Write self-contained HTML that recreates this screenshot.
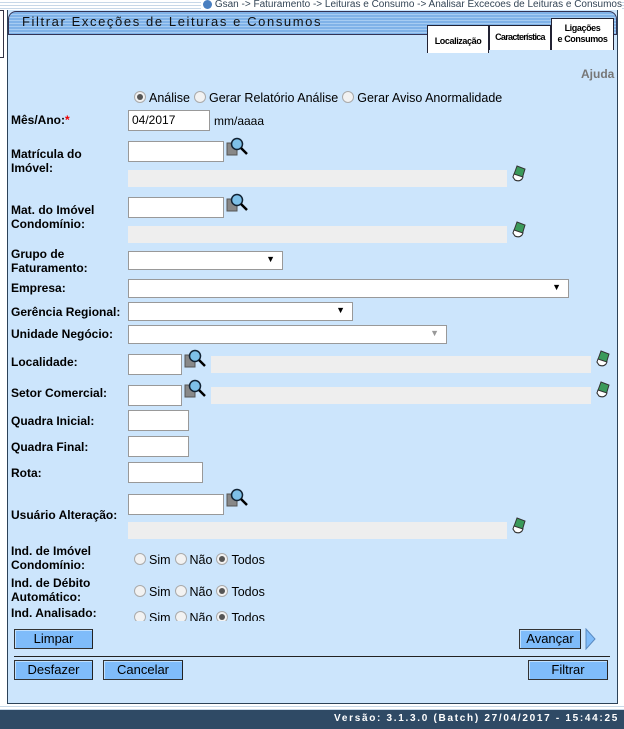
<!DOCTYPE html>
<html><head><meta charset="utf-8"><style>
*{margin:0;padding:0;box-sizing:border-box}
body{width:624px;height:729px;position:relative;overflow:hidden;background:#fff;font-family:"Liberation Sans",sans-serif;font-size:12px;color:#000}
.a{position:absolute}
.top{left:0;top:0;width:624px;height:10px;background:repeating-linear-gradient(#fff 0,#fff 2px,#c8d8e8 2px,#c8d8e8 3px)}
.crumb{right:2px;top:-1px;font-size:10px;color:#345;background:#fff;padding-left:14px;line-height:11px}
.crumb:before{content:"";position:absolute;left:2px;top:1px;width:9px;height:9px;border-radius:50%;background:#4a7fc0}
.panel{left:7px;top:10px;width:611px;height:694px;background:#cce5fc;border:1px solid #2c4258;border-top:none}
.hdr{left:8px;top:11px;width:609px;height:24px;border-radius:8px 8px 0 0;background:repeating-linear-gradient(#7fb2e8 0,#7fb2e8 2px,#a6ccf2 2px,#a6ccf2 3px);border:1px solid #335}
.ttl{left:22px;top:14px;font-size:13px;letter-spacing:1.6px;color:#111}
.tab{background:#fff;border:1px solid #223;border-bottom:none;font-weight:bold;font-size:9px;letter-spacing:-0.4px;text-align:center;line-height:11px;white-space:nowrap;overflow:hidden}
.lb{font-weight:bold;font-size:12px;line-height:14px}
.in{background:#fff;border:1px solid #999;height:21px;padding:2px 3px;font-size:12px}
.ro{background:#eee;height:17px}
.sel{background:#fff;border:1px solid #999;height:19px}
.sel:after{content:"▼";position:absolute;right:7px;top:2px;font-size:9px}
.rg{font-size:12.5px}
.r{width:12px;height:12px;border-radius:50%;border:1px solid #aaa;background:#f2f2f2;display:inline-block;vertical-align:-1px;margin:0 3px 0 4px}
.r:first-child{margin-left:0}
.r.on:after{content:"";display:block;width:6px;height:6px;margin:2px;border-radius:50%;background:#555}
.btn{background:#7fbcfa;border:1px solid #333;border-right-color:#222;box-shadow:inset 1px 1px #bfe0ff;height:20px;text-align:center;font-size:13px;line-height:18px}
.lp{width:22px;height:22px}
.er{width:16px;height:18px}
.foot{left:0;top:710px;width:624px;height:19px;background:#2f4a65;color:#fff;font-weight:bold;font-size:10px;letter-spacing:1.7px;text-align:right;padding-right:5px;line-height:17px}
</style></head><body>
<div class="a top"></div>
<div class="a crumb">Gsan -&gt; Faturamento -&gt; Leituras e Consumo -&gt; Analisar Excecoes de Leituras e Consumos</div>
<div class="a" style="left:0;top:10px;width:4px;height:48px;border:1px solid #334;border-left:none"></div>
<div class="a panel"></div>
<div class="a hdr"></div>
<div class="a ttl">Filtrar Exceções de Leituras e Consumos</div>
<div class="a tab" style="left:427px;top:25px;width:62px;height:28px;line-height:24px;padding-top:3px">Localização</div>
<div class="a tab" style="left:489px;top:25px;width:62px;height:25px;line-height:22px;letter-spacing:-0.7px">Característica</div>
<div class="a tab" style="left:551px;top:18px;width:63px;height:32px;padding-top:4px">Ligações<br>e Consumos</div>
<div class="a lb" style="left:581px;top:67px;color:#777">Ajuda</div>

<div class="a rg" style="left:134px;top:91px"><span class="r on"></span>Análise<span class="r"></span>Gerar Relatório Análise<span class="r"></span>Gerar Aviso Anormalidade</div>
<div class="a lb" style="left:11px;top:113px">Mês/Ano:<span style="color:#e00">*</span></div>
<div class="a in" style="left:128px;top:110px;width:82px">04/2017</div>
<div class="a" style="left:214px;top:114px">mm/aaaa</div>

<div class="a lb" style="left:11px;top:147px">Matrícula do<br>Imóvel:</div>
<div class="a in" style="left:128px;top:141px;width:96px"></div>
<div class="a ro" style="left:128px;top:170px;width:379px"></div>
<div class="a lb" style="left:11px;top:203px">Mat. do Imóvel<br>Condomínio:</div>
<div class="a in" style="left:128px;top:197px;width:96px"></div>
<div class="a ro" style="left:128px;top:226px;width:379px"></div>

<div class="a lb" style="left:11px;top:247px">Grupo de<br>Faturamento:</div>
<div class="a sel" style="left:128px;top:251px;width:155px"></div>
<div class="a lb" style="left:11px;top:281px">Empresa:</div>
<div class="a sel" style="left:128px;top:279px;width:441px"></div>
<div class="a lb" style="left:11px;top:305px">Gerência Regional:</div>
<div class="a sel" style="left:128px;top:302px;width:225px"></div>
<div class="a lb" style="left:11px;top:327px">Unidade Negócio:</div>
<div class="a sel" style="left:128px;top:325px;width:319px;color:#999"></div>

<div class="a lb" style="left:11px;top:355px">Localidade:</div>
<div class="a in" style="left:128px;top:354px;width:54px"></div>
<div class="a ro" style="left:211px;top:356px;width:380px"></div>
<div class="a lb" style="left:11px;top:386px">Setor Comercial:</div>
<div class="a in" style="left:128px;top:385px;width:54px"></div>
<div class="a ro" style="left:211px;top:387px;width:380px"></div>
<div class="a lb" style="left:11px;top:414px">Quadra Inicial:</div>
<div class="a in" style="left:128px;top:410px;width:61px"></div>
<div class="a lb" style="left:11px;top:440px">Quadra Final:</div>
<div class="a in" style="left:128px;top:436px;width:61px"></div>
<div class="a lb" style="left:11px;top:466px">Rota:</div>
<div class="a in" style="left:128px;top:462px;width:75px"></div>
<div class="a lb" style="left:11px;top:508px">Usuário Alteração:</div>
<div class="a in" style="left:128px;top:494px;width:96px"></div>
<div class="a ro" style="left:128px;top:522px;width:379px"></div>

<div class="a lb" style="left:11px;top:544px">Ind. de Imóvel<br>Condomínio:</div>
<div class="a rg" style="left:134px;top:553px"><span class="r"></span>Sim<span class="r"></span>Não<span class="r on"></span>Todos</div>
<div class="a lb" style="left:11px;top:576px">Ind. de Débito<br>Automático:</div>
<div class="a rg" style="left:134px;top:585px"><span class="r"></span>Sim<span class="r"></span>Não<span class="r on"></span>Todos</div>
<div class="a" style="left:8px;top:606px;width:600px;height:15px;overflow:hidden">
<div class="a lb" style="left:3px;top:0">Ind. Analisado:</div>
<div class="a rg" style="left:126px;top:5px"><span class="r"></span>Sim<span class="r"></span>Não<span class="r on"></span>Todos</div></div>

<div class="a btn" style="left:14px;top:629px;width:79px">Limpar</div>
<div class="a btn" style="left:519px;top:629px;width:62px">Avançar</div>
<svg class="a" style="left:585px;top:628px" width="12" height="22"><path d="M1 1 L10 11 L1 21 Z" fill="#7fbcfa" stroke="#5a8ac0"/></svg>
<div class="a" style="left:14px;top:656px;width:596px;height:1px;background:#222"></div>
<div class="a btn" style="left:14px;top:660px;width:79px">Desfazer</div>
<div class="a btn" style="left:103px;top:660px;width:80px">Cancelar</div>
<div class="a btn" style="left:528px;top:660px;width:80px">Filtrar</div>

<div class="a" style="left:0;top:704px;width:624px;height:6px;background:repeating-linear-gradient(#fff 0,#fff 2px,#c8d8e8 2px,#c8d8e8 3px)"></div>
<div class="a foot">Versão: 3.1.3.0 (Batch) 27/04/2017 - 15:44:25</div>

<svg width="0" height="0" style="position:absolute"><defs>
<g id="lp"><rect x="1" y="6" width="10" height="12" fill="#888" stroke="#555"/><circle cx="11" cy="7" r="5.5" fill="#7ec0e8" stroke="#123" stroke-width="1.5"/><path d="M15 11 L21 17" stroke="#000" stroke-width="2.5"/></g>
<g id="er"><path d="M6 2 L14 5 L11 15 Q8 18 4 16 L2 13 Z" fill="#3a9a5a" stroke="#333"/><path d="M3 10 L12 13 L11 15 Q8 18 4 16 L2 13 Z" fill="#fff" stroke="#333"/></g>
</defs></svg>
<svg class="a lp" style="left:226px;top:137px"><use href="#lp"/></svg>
<svg class="a lp" style="left:226px;top:193px"><use href="#lp"/></svg>
<svg class="a lp" style="left:184px;top:349px"><use href="#lp"/></svg>
<svg class="a lp" style="left:184px;top:379px"><use href="#lp"/></svg>
<svg class="a lp" style="left:226px;top:488px"><use href="#lp"/></svg>
<svg class="a er" style="left:511px;top:164px"><use href="#er"/></svg>
<svg class="a er" style="left:511px;top:220px"><use href="#er"/></svg>
<svg class="a er" style="left:595px;top:349px"><use href="#er"/></svg>
<svg class="a er" style="left:595px;top:380px"><use href="#er"/></svg>
<svg class="a er" style="left:511px;top:516px"><use href="#er"/></svg>
</body></html>
